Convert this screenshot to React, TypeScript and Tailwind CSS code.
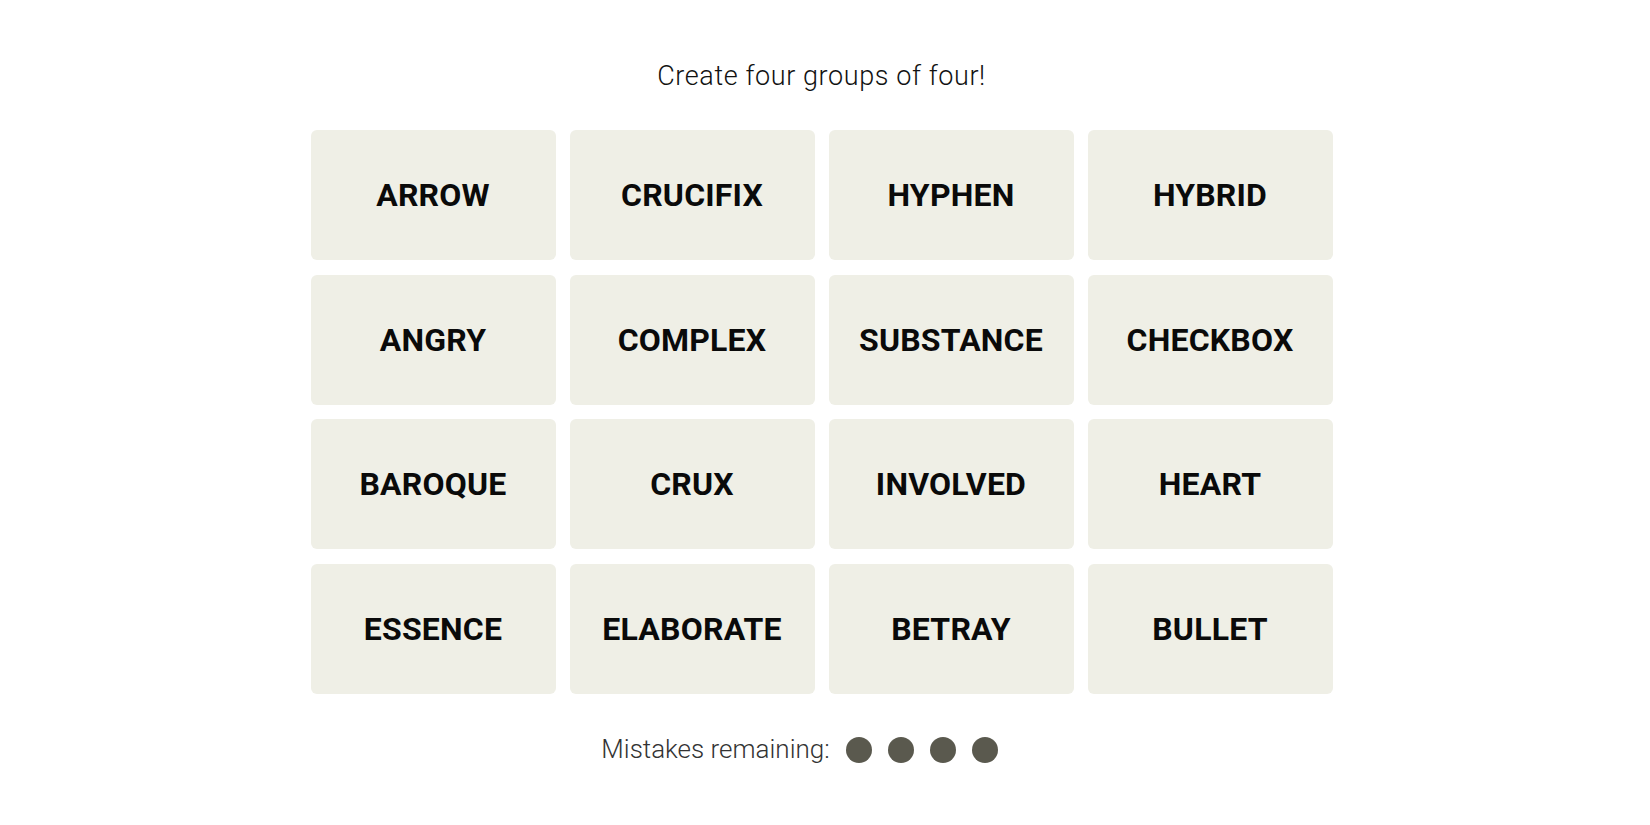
const words = [
  'ARROW', 'CRUCIFIX', 'HYPHEN', 'HYBRID',
  'ANGRY', 'COMPLEX', 'SUBSTANCE', 'CHECKBOX',
  'BAROQUE', 'CRUX', 'INVOLVED', 'HEART',
  'ESSENCE', 'ELABORATE', 'BETRAY', 'BULLET',
];

function Tile({ word }: { word: string }) {
  return (
    <button className="h-[130px] w-[245px] rounded-md bg-[#efefe6] flex items-center justify-center text-[32px] font-bold text-[#0a0a0a] tracking-[0.2px]">
      {word}
    </button>
  );
}

export default function App() {
  return (
    <div
      className="min-h-screen bg-white flex flex-col items-center pr-[7px] pt-[60px]"
      style={{ fontFamily: 'Roboto, "Liberation Sans", sans-serif' }}
    >
      <h2 className="text-[27px] leading-[32px] font-light text-[#121212] tracking-[0.6px]">Create four groups of four!</h2>

      <div className="mt-[38px] grid grid-cols-4 gap-x-[14px] gap-y-[14.5px]">
        {words.map((w) => (
          <Tile key={w} word={w} />
        ))}
      </div>

      <div className="mt-[40px] flex items-center gap-[16px] pr-[44px] h-[32px]">
        <span className="text-[26px] font-light text-[#333333]">Mistakes remaining:</span>
        <div className="flex gap-[16px]">
          {[0, 1, 2, 3].map((i) => (
            <span key={i} className="h-[26px] w-[26px] rounded-full bg-[#5a594e]" />
          ))}
        </div>
      </div>
    </div>
  );
}
